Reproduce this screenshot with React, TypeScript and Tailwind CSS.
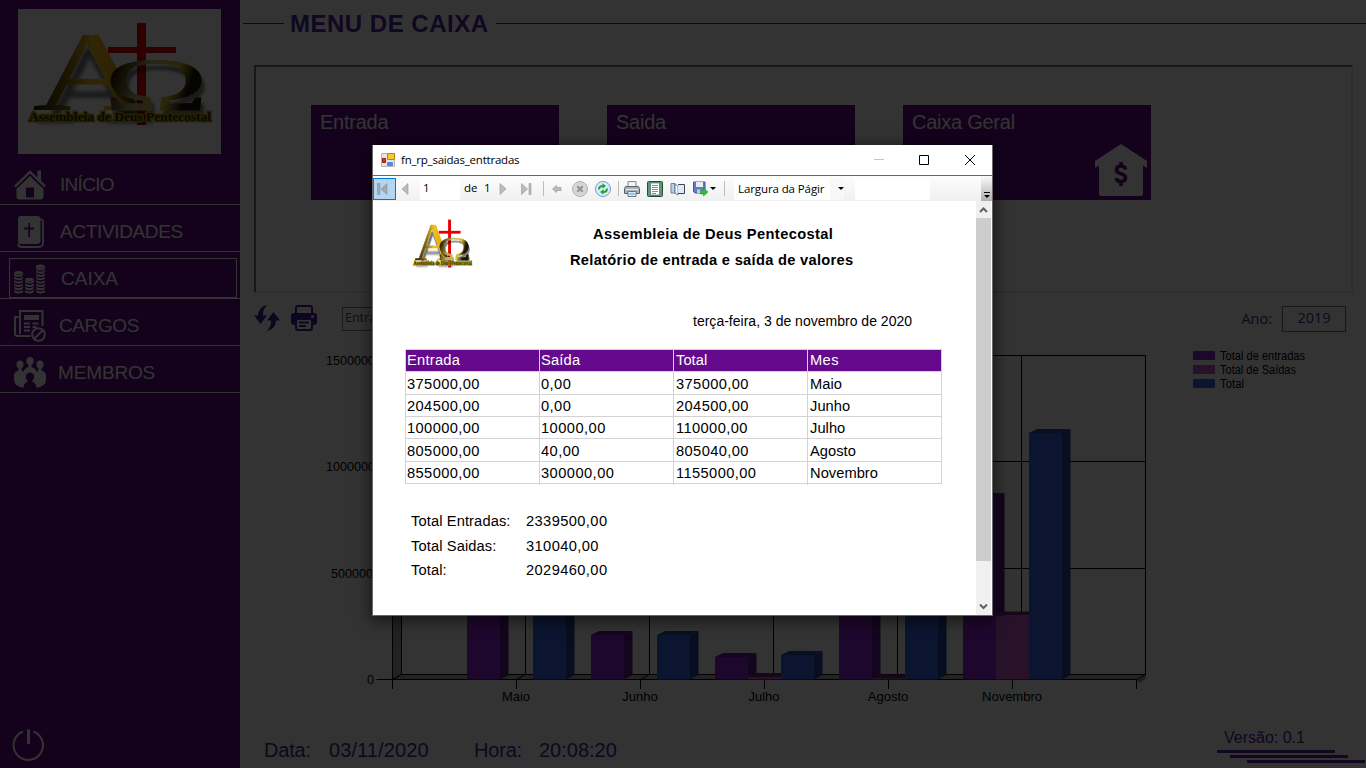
import type { ReactNode } from "react";

const arial = "font-['Liberation_Sans',Arial,sans-serif]";
const segoe = "font-['Open_Sans','Noto_Sans',sans-serif]";

function Logo({ id, className }: { id: string; className: string }) {
  return (
    <svg viewBox="0 0 203 145" preserveAspectRatio="none" className={className}>
      <defs>
        <linearGradient id={id + "a"} x1="0" y1="0" x2="1" y2="0">
          <stop offset="0" stopColor="#241b02" />
          <stop offset="0.3" stopColor="#8a6a10" />
          <stop offset="0.5" stopColor="#f2c21c" />
          <stop offset="0.72" stopColor="#e0a80c" />
          <stop offset="1" stopColor="#2a1d00" />
        </linearGradient>
        <linearGradient id={id + "o"} x1="0" y1="0" x2="1" y2="0.3">
          <stop offset="0" stopColor="#7a5a08" />
          <stop offset="0.2" stopColor="#2c2200" />
          <stop offset="0.45" stopColor="#b8b070" />
          <stop offset="0.74" stopColor="#d8c030" />
          <stop offset="0.9" stopColor="#1c1500" />
        </linearGradient>
        <filter id={id + "s"} x="-10%" y="-10%" width="125%" height="135%">
          <feDropShadow dx="3" dy="13" stdDeviation="2" floodColor="#000" floodOpacity="0.55" />
        </filter>
        <filter id={id + "t"} x="-10%" y="-10%" width="125%" height="125%">
          <feDropShadow dx="3" dy="6" stdDeviation="1.6" floodColor="#000" floodOpacity="0.5" />
        </filter>
      </defs>
      <rect x="119" y="14" width="9" height="102" fill="#e60000" />
      <rect x="90" y="38" width="68" height="6" fill="#e60000" />
      <g className="font-['Liberation_Serif',serif]">
        <text x="15" y="101" fontSize="113" textLength="118" lengthAdjust="spacingAndGlyphs" fill={`url(#${id}a)`} stroke={`url(#${id}a)`} strokeWidth="0.800" filter={`url(#${id}s)`}>A</text>
        <text x="86" y="100.500" fontSize="74" textLength="104" lengthAdjust="spacingAndGlyphs" fill={`url(#${id}o)`} stroke={`url(#${id}o)`} strokeWidth="0.800" filter={`url(#${id}t)`}>Ω</text>
        <text x="11" y="111.500" fontSize="12.500" textLength="182" lengthAdjust="spacingAndGlyphs" className="font-bold" fill="#332a20" stroke="#b5a900" strokeWidth="3" paintOrder="stroke">
          Assembleia de Deus Pentecostal
        </text>
      </g>
    </svg>
  );
}

const HomeIcon = () => (
  <svg viewBox="0 0 32 30" className="h-[30px] w-8" fill="currentColor">
    <path d="M1 16.500 16 2 31 16.500" fill="none" stroke="currentColor" strokeWidth="2.400" />
    <path d="M23.500 0.500h3.500v11l-3.500-3.500z" />
    <path fillRule="evenodd" d="M16 6 29.500 19v7.500a3 3 0 0 1-3 3h-21a3 3 0 0 1-3-3V19zM13 17.500a1 1 0 0 0-1 1v9h8V18.500a1 1 0 0 0-1-1z" />
  </svg>
);

const BibleIcon = () => (
  <svg viewBox="0 0 32 32" className="size-8" fill="currentColor">
    <path fillRule="evenodd" d="M6.500 0H23a3.500 3.500 0 0 1 3.500 3.500V25A3.500 3.500 0 0 1 23 28H6.500A2.500 2.500 0 0 1 4 25.500v-23A2.500 2.500 0 0 1 6.500 0zM14.300 7v4.500H10v2h4.300V21h1.700V13.500h4.200v-2h-4.200V7z" />
    <path d="M26.500 3q2.500 .8 2.500 3v20.500q0 4.500-4.500 4.500H8q-3.500 0-4-3" fill="none" stroke="currentColor" strokeWidth="1.800" />
  </svg>
);

function Stack({ x, n, bottom }: { x: number; n: number; bottom: number }) {
  return (
    <>
      {Array.from({ length: n }, (_, i) => (
        <path
          key={i}
          d={`M${x} ${bottom - i * 3.3 - 3.2}v1.200c0 1.700 2 2.500 4.500 2.500s4.500-.8 4.500-2.500v-1.200q-1 1.800-4.500 1.800t-4.500-1.800z`}
        />
      ))}
      <ellipse cx={x + 4.5} cy={bottom - n * 3.3 - 0.4} rx="4.300" ry="1.700" />
    </>
  );
}

const CoinsIcon = () => (
  <svg viewBox="0 0 32 31" className="h-[31px] w-8" fill="currentColor">
    <Stack x={0} n={6} bottom={30} />
    <Stack x={11} n={4} bottom={30} />
    <Stack x={22} n={8} bottom={30} />
  </svg>
);

const CargosIcon = () => (
  <svg viewBox="0 0 32 32" className="size-8" fill="none" stroke="currentColor" strokeWidth="2">
    <path d="M4.500 7H1v16.500q0 2.500 3 2.500h12.500M6 24V1h22.500v15" />
    <path d="M10 5h15v5H10z" fill="currentColor" stroke="none" />
    <path d="M10 13.500h6M10 17h6M10 20.500h6M18.500 13.500h6M18.500 17h4" />
    <circle cx="24.500" cy="24.500" r="6.300" />
    <path d="m20.500 28.500 8-8" />
  </svg>
);

const PeopleIcon = () => (
  <svg viewBox="0 0 32 31" className="h-[31px] w-8" fill="currentColor">
    <ellipse cx="16" cy="4" rx="3.700" ry="4" />
    <ellipse cx="6" cy="7.500" rx="3.500" ry="3.900" />
    <ellipse cx="26" cy="7.500" rx="3.500" ry="3.900" />
    <path d="M14.500 7h3v3q4 1 5 4.500l-2.500 3.500q-1-2.500-4-2.500t-4 2.500L9.500 14.500Q10.500 11 14.500 10z" />
    <path d="M4.500 10.500h3V13.500q3 .8 4.500 4 -.5 4.500 2 7-4.500 1.500-4.500 6.500Q2 29 .5 25.500 0 24 0 18q.5-3.500 4.500-4.500zM27.500 10.500h-3V13.500q-3 .8-4.500 4 .5 4.500-2 7 4.500 1.500 4.500 6.500Q30 29 31.500 25.500 32 24 32 18q-.5-3.500-4.500-4.500z" />
  </svg>
);

const menu: { label: string; icon: ReactNode; text: string; selected?: boolean }[] = [
  { label: "INÍCIO", icon: <HomeIcon />, text: "ml-[14px] tracking-[-0.7px]" },
  { label: "ACTIVIDADES", icon: <BibleIcon />, text: "ml-[14px] tracking-[-0.35px]" },
  { label: "CAIXA", icon: <CoinsIcon />, text: "ml-[15px]", selected: true },
  { label: "CARGOS", icon: <CargosIcon />, text: "ml-[13px] tracking-[-0.4px]" },
  { label: "MEMBROS", icon: <PeopleIcon />, text: "ml-[12px] tracking-[-0.15px]" },
];

function Sidebar() {
  return (
    <aside className="flex w-[240px] shrink-0 flex-col bg-[#650a8c] text-white">
      <div className="mt-[9px] ml-[18px] h-[145px] w-[203px] bg-white">
        <Logo id="big" className="h-[145px] w-[203px]" />
      </div>
      <nav className="mt-1">
        {menu.map((m) => (
          <div key={m.label} className="relative flex h-[47px] items-center border-b border-white pt-[7px] pl-[14px]">
            {m.selected && <div className="absolute top-[6px] left-[9px] h-10 w-[228px] border border-white" />}
            {m.icon}
            <span className={`${m.text} text-[19px] leading-6`}>{m.label}</span>
          </div>
        ))}
      </nav>
      <svg viewBox="0 0 32 32" className="mt-auto mb-[7px] ml-3 size-8" fill="none" stroke="currentColor" strokeWidth="2">
        <path d="M11 2.500A14.700 14.700 0 1 0 21.500 2.500" />
        <path d="M16.500 0.500v14.500" strokeWidth="3" />
      </svg>
    </aside>
  );
}

type Bar = { x: number; top: number; kind: "e" | "s" | "t" };
const palette = {
  e: { front: "#9626dc", side: "#601a90", top: "#701ca4" },
  s: { front: "#c05ad0", side: "#7a3080", top: "#702b78" },
  t: { front: "#3c69ec", side: "#26459a", top: "#2a4aa6" },
};
const bars: Bar[] = [
  { x: 467, top: 599, kind: "e" },
  { x: 533, top: 599, kind: "t" },
  { x: 591, top: 635, kind: "e" },
  { x: 657, top: 635, kind: "t" },
  { x: 715, top: 657, kind: "e" },
  { x: 748, top: 677, kind: "s" },
  { x: 781, top: 655, kind: "t" },
  { x: 839, top: 508, kind: "e" },
  { x: 872, top: 678.5, kind: "s" },
  { x: 905, top: 508, kind: "t" },
  { x: 963, top: 497, kind: "e" },
  { x: 996, top: 615.5, kind: "s" },
  { x: 1029, top: 433, kind: "t" },
];
const months = ["Maio", "Junho", "Julho", "Agosto", "Novembro"];
const legend = [
  { label: "Total de entradas", fill: "#9626dc" },
  { label: "Total de Saídas", fill: "#c05ad0" },
  { label: "Total", fill: "#3c69ec" },
];

function Chart() {
  return (
    <svg viewBox="240 345 1126 365" className="h-[365px] w-[1126px]">
      <path d="M392.500 359.500 401.500 355v319.500l-9 5z" fill="#a8a8a8" />
      <path d="M392.500 679.500 401.500 674.500h744l-9 5z" fill="#b0b0b0" />
      <path d="M1136.500 679.500 1146 674.500v4l-7 5z" fill="#999" />
      <g stroke="#000" fill="none">
        {[0, 1, 2, 3, 4, 5, 6].map((i) => (
          <path key={i} d={`M${401.5 + i * 124} 355V674.500L${392.5 + i * 124} 679.500V689`} />
        ))}
        {[355.5, 461.5, 568.5, 674.5].map((y) => (
          <path key={y} d={`M376.500 ${y + 5}H392.500L401.500 ${y}H1145.500`} />
        ))}
        <path d="M392.500 360V679.500H1136.500" />
      </g>
      {bars.map((b) => {
        const c = palette[b.kind];
        return (
          <g key={b.x}>
            <path d={`M${b.x} ${b.top}l8-4h33.500l-8 4z`} fill={c.top} />
            <path d={`M${b.x + 33} ${b.top}l8.500-4V675l-8.500 4.500z`} fill={c.side} />
            <path d={`M${b.x} ${b.top}h33V679.500h-33z`} fill={c.front} />
          </g>
        );
      })}
      <g className={arial} fontSize="13" textAnchor="middle">
        {months.map((m, i) => (
          <text key={m} x={516 + i * 124} y="701">{m}</text>
        ))}
      </g>
      <g className={arial} fontSize="12.600" textAnchor="end">
        <text x="375" y="364.500">1500000</text>
        <text x="375" y="470.500">1000000</text>
        <text x="373" y="577.500">500000</text>
        <text x="374" y="684">0</text>
      </g>
      <g className={arial} fontSize="12">
        {legend.map((l, i) => (
          <g key={l.label}>
            <rect x="1193" y={351 + i * 14} width="22" height="9" fill={l.fill} />
            <text x="1220" y={360 + i * 14} textLength={[85, 76, 24][i]} lengthAdjust="spacingAndGlyphs">{l.label}</text>
          </g>
        ))}
      </g>
    </svg>
  );
}

function Page() {
  return (
    <main className="flex w-[1126px] flex-col bg-white">
      <header className="flex h-[47px] items-center pl-[3px]">
        <div className="h-px w-[41px] bg-[#500a78]" />
        <h1 className="ml-[6px] w-[206px] text-[24px] leading-none font-bold tracking-[0.5px] whitespace-nowrap text-[#5026a0]">MENU DE CAIXA</h1>
        <div className="h-px flex-1 bg-[#500a78]" />
      </header>
      <section className="mt-[18px] ml-[14px] flex h-[228px] w-[1099px] gap-12 border-2 border-t-[#787878] border-r-[#e4e4e4] border-b-[#e4e4e4] border-l-[#787878] pt-[38px] pl-[55px] text-[20px] leading-6 text-white">
        {["Entrada", "Saida", "Caixa Geral"].map((c) => (
          <div key={c} className="flex h-[95px] w-[248px] flex-col bg-[#650a8c] pt-[5px] pr-1 pl-[9px] tracking-[-0.25px]">
            {c}
            {c === "Caixa Geral" && (
              <svg viewBox="0 0 52 52" className="mt-[10px] size-[52px] self-end" fill="currentColor">
                <path d="M26 0 52 17v7l-4-2.500V50a2 2 0 0 1-2 2H6a2 2 0 0 1-2-2V21.500L0 24v-7z" />
                <path d="M30.500 25.500q-.5-3.500-4.500-3.500t-4.500 3.500q0 3 4.500 4.300t4.500 4.200q0 3.500-4.500 3.500t-4.500-3.500M26 18v4M26 38v4" fill="none" stroke="#650a8c" strokeWidth="3.600" />
              </svg>
            )}
          </div>
        ))}
      </section>
      <section className="flex h-[52px] items-start pt-3">
        <svg viewBox="0 0 26 26" className="ml-[14px] size-[26px]" fill="#46209c">
          <path d="M13.500 0Q5 1 3.800 10.500H0L6.500 19 13 10.500H9Q8.500 4 13.500 0zM12.500 26q8.500-1 9.700-10.500H26L19.500 7 13 15.500h4q.5 6.500-4.500 10.500z" />
        </svg>
        <svg viewBox="0 0 26 26" className="ml-[11px] size-[26px]" fill="none" stroke="#46209c" strokeWidth="2">
          <path d="M5 9V3q0-2 2-2h12q2 0 2 2v6" />
          <path d="M3 8h20q3 0 3 3v6q0 3-3 3h-1.500v-5h-17v5H3q-3 0-3-3v-6q0-3 3-3z" fill="#46209c" stroke="none" />
          <path d="M5 15v8q0 2 2 2h12q2 0 2-2v-8M8 17.500h10M8 21h7" />
          <circle cx="21.500" cy="11.500" r="1.500" fill="#fff" stroke="none" />
        </svg>
        <div className={`${segoe} mt-[2px] ml-[25px] h-6 w-[200px] border border-[#808080] pl-[2px] text-[12.500px] leading-[20px] text-[#781ea0]`}>Entradas e Saídas</div>
        <span className={`${segoe} mt-[4px] ml-auto text-[14.500px] leading-5 text-[#5a1e8c]`}>Ano:</span>
        <div className={`${segoe} mt-px mr-5 ml-[10px] h-[26px] w-16 border border-[#787878] text-center text-[14.500px] leading-[22px] text-[#5a1e8c]`}>2019</div>
      </section>
      <Chart />
      <footer className="mt-[19px] flex h-[39px] text-[20px] leading-[42px] text-[#46289c]">
        <span className="ml-6 w-[65px] tracking-[-0.2px]">Data:</span>
        <span className="w-[145px] tracking-[0.1px]">03/11/2020</span>
        <span className="w-[65px] tracking-[-0.2px]">Hora:</span>
        <span>20:08:20</span>
        <div className="ml-auto flex w-[149px] flex-col items-start">
          <span className="ml-[7px] h-[21px] text-[16px] leading-[18px]">Versão: 0.1</span>
          <div className="h-[3px] w-[118px] bg-[#5a1ea0]" />
          <div className="mt-[2px] ml-[13px] h-[3px] w-[118px] bg-[#5a1ea0]" />
          <div className="mt-[2px] ml-[30px] h-[3px] w-[118px] bg-[#5a1ea0]" />
        </div>
      </footer>
    </main>
  );
}

const Sep = ({ className }: { className: string }) => <div className={`h-[15px] w-px shrink-0 bg-[#bdbdbd] ${className}`} />;
const Caret = ({ className }: { className: string }) => (
  <svg viewBox="0 0 6 3" className={`h-[3px] w-[6px] shrink-0 ${className}`}><path d="M0 0h6L3 3z" /></svg>
);

function Toolbar() {
  return (
    <div className={`${segoe} flex h-[25px] items-center bg-linear-to-b from-[#fdfdfd] to-[#f0f0f0] text-[11.500px] leading-none text-black`}>
      <div className="flex h-[22px] w-[23px] items-center border border-[#0078d7] bg-[#b3d7f3] pl-[3px]">
        <svg viewBox="0 0 11 12" className="h-3 w-[11px]" fill="#a3a9ae" stroke="#8b949b" strokeWidth="0.600"><path d="M.5.5H3v11H.5zM10 .5v11L4 6z" /></svg>
      </div>
      <svg viewBox="0 0 8 12" className="ml-[5px] h-3 w-2" fill="#bbb" stroke="#999" strokeWidth="0.600"><path d="M7 .5v11L1 6z" /></svg>
      <div className="ml-[11px] flex h-[23px] w-10 items-center bg-white pb-px pl-[3px]">1</div>
      <span className="mb-px ml-1 w-[20px]">de</span>
      <span className="mb-px w-[15px]">1</span>
      <svg viewBox="0 0 8 12" className="h-3 w-2" fill="#bbb" stroke="#999" strokeWidth="0.600"><path d="M1 .5v11L7 6z" /></svg>
      <svg viewBox="0 0 11 12" className="ml-[14px] h-3 w-[11px]" fill="#bbb" stroke="#999" strokeWidth="0.600"><path d="M8 .5h2v11H8zM.5.5v11L6.500 6z" /></svg>
      <Sep className="ml-[11px]" />
      <svg viewBox="0 0 10 10" className="ml-2 size-[10px]" fill="#bbb" stroke="#999" strokeWidth="0.700"><path d="M.5 5 4.500 1.500v2h4.500v3H4.500v2z" /></svg>
      <svg viewBox="0 0 16 16" className="ml-[10px] size-4">
        <circle cx="8" cy="8" r="7.500" fill="#d6d6d6" stroke="#b2b2b2" />
        <path d="m5.300 5.300 5.400 5.400m0-5.400-5.400 5.400" stroke="#939393" strokeWidth="2" />
      </svg>
      <svg viewBox="0 0 16 16" className="ml-[7px] size-4">
        <circle cx="8" cy="8" r="7.500" fill="#dcecfb" stroke="#6a9fd8" />
        <path d="M3 8.500Q3 4 7.500 4V2.200L11 5 7.500 7.800V6Q5 6 5 8.500zM13 7.500Q13 12 8.500 12v1.800L5 11l3.500-2.800V10q2.500 0 2.500-2.500z" fill="#22a536" />
      </svg>
      <Sep className="ml-[7px]" />
      <svg viewBox="0 0 16 16" className="ml-[5px] size-4">
        <path d="M4 .5h8V6H4z" fill="#eef4fa" stroke="#7c8690" />
        <path d="M1.500 5.500h13l1 2v5H.5v-5z" fill="#a9b0b6" stroke="#5c646c" />
        <path d="M2 8.500h12" stroke="#e8edf0" />
        <path d="M4 10.500h8v5H4z" fill="#d9ecfa" stroke="#6c7680" />
        <path d="M5.500 13h5" stroke="#3f9bdc" />
      </svg>
      <svg viewBox="0 0 16 16" className="ml-[7px] size-4">
        <rect x=".5" y=".5" width="15" height="15" rx="1" fill="#5a9a6c" stroke="#2a4a34" />
        <path d="M3.500 2h9v12h-9z" fill="#fff" stroke="#2f5f8a" strokeWidth="0.600" />
        <path d="M5 4.500h6M5 6.500h6M5 8.500h6M5 10.500h6M5 12.500h4" stroke="#6a86b0" strokeWidth="0.900" />
      </svg>
      <svg viewBox="0 0 16 16" className="ml-[7px] size-4">
        <path d="M1 2.500h4v9.500H1z" fill="#b8d0ee" stroke="#77828e" />
        <path d="M5 3 8 5.500V14L5 12z" fill="#fff" stroke="#55606c" strokeWidth="0.800" />
        <path d="M8 3.500h7v9H8z" fill="#dce9f8" />
        <path d="M8 3.500h6.500v9H8" fill="none" stroke="#3d4652" />
      </svg>
      <svg viewBox="0 0 16 16" className="ml-[7px] size-4">
        <path d="M.5 1h11.500v11H2L.5 10.500z" fill="#6478c8" stroke="#4655a0" />
        <path d="M3 1h7v5H3z" fill="#e3edf8" />
        <path d="M4 8.500h5V12H4z" fill="#c3cce4" />
        <path d="M7.500 9h3V7l4.500 4-4.500 4v-2h-3z" fill="#2fbe3c" stroke="#0e8a1c" strokeWidth="0.500" />
      </svg>
      <Caret className="ml-px" />
      <Sep className="ml-[8px]" />
      <div className="ml-[9px] flex h-[22px] w-[110px] items-center bg-white pl-1">
        <span className="w-[92px] leading-4 tracking-[-0.100px] whitespace-nowrap">Largura da Págir</span>
        <div className="flex h-[22px] w-[14px] items-center bg-[#f8f8f8] pl-[8px]"><Caret className="" /></div>
      </div>
      <div className="ml-[11px] h-[22px] w-[75px] bg-white" />
      <div className="ml-auto flex h-[25px] w-[11px] items-end justify-center bg-linear-to-b from-[#fafafa] to-[#b0b0b0] pb-[3px]">
        <svg viewBox="0 0 6 6" className="size-[6px]"><path d="M0 0h6v1H0zM0 3h6L3 6z" /></svg>
      </div>
    </div>
  );
}

const rows = [
  ["375000,00", "0,00", "375000,00", "Maio"],
  ["204500,00", "0,00", "204500,00", "Junho"],
  ["100000,00", "10000,00", "110000,00", "Julho"],
  ["805000,00", "40,00", "805040,00", "Agosto"],
  ["855000,00", "300000,00", "1155000,00", "Novembro"],
];
const rowStyles = ["h-[23px] leading-[24px]", "h-[22px] leading-[23px]", "h-[22px] leading-[23px]", "h-[23px] leading-[24px]", "h-[22px] leading-[23px]"];
const cellStyles = ["pl-px tracking-[0.400px]", "pl-px tracking-[0.450px]", "pl-[2px] tracking-[0.400px]", "pl-[2px] tracking-[0.050px]"];
const headStyles = ["pl-px tracking-[0.250px]", "pl-px tracking-[0.200px]", "pl-[2px] tracking-[0.050px]", "pl-[2px] tracking-[0.400px]"];
const totals = [
  ["Total Entradas:", "2339500,00", "h-[25px]"],
  ["Total Saidas:", "310040,00", "h-[24px]"],
  ["Total:", "2029460,00", "h-[24px]"],
];

function Report() {
  return (
    <div className="flex w-[603px] flex-col overflow-hidden bg-white text-[14.670px] text-black">
      <div className="flex h-[148px]">
        <Logo id="small" className="mt-[12px] ml-[37px] h-[68px] w-[65px]" />
        <div className="ml-[95px] flex flex-col pt-[20px] font-bold">
          <span className="ml-[23px] h-[26px] leading-[26px] tracking-[0.380px]">Assembleia de Deus Pentecostal</span>
          <span className="h-[26px] leading-[26px] tracking-[0.290px]">Relatório de entrada e saída de valores</span>
          <span className="mt-[40px] ml-[123px] text-[14px] leading-4 font-normal tracking-[0.010px] whitespace-nowrap">terça-feira, 3 de novembro de 2020</span>
        </div>
      </div>
      <div className="ml-8 flex w-[537px] flex-col border border-[#d3d3d3]">
        <div className="grid h-[21px] grid-cols-[134px_134px_134px_133px] divide-x divide-[#d3d3d3] bg-[#650a8c] leading-[20px] text-white">
          {["Entrada", "Saída", "Total", "Mes"].map((h, j) => (
            <div key={h} className={headStyles[j]}>{h}</div>
          ))}
        </div>
        {rows.map((r, i) => (
          <div key={i} className={`${rowStyles[i]} grid grid-cols-[134px_134px_134px_133px] divide-x divide-[#d3d3d3] border-t border-[#d3d3d3]`}>
            {r.map((v, j) => (
              <div key={j} className={cellStyles[j]}>{v}</div>
            ))}
          </div>
        ))}
      </div>
      <div className="mt-[25px] ml-[38px] flex flex-col leading-6 tracking-[0.400px]">
        {totals.map(([l, v, h]) => (
          <div key={l} className={`${h} flex`}>
            <span className="w-[115px] tracking-[0.120px]">{l}</span>
            <span>{v}</span>
          </div>
        ))}
      </div>
    </div>
  );
}

function ReportWindow() {
  return (
    <div className="absolute top-[145px] left-[372px] flex h-[471px] w-[621px] flex-col border-r border-b border-l border-[#696969] bg-white shadow-[0_3px_14px_2px_rgba(0,0,0,0.55)]">
      <div className={`${segoe} flex h-[31px] items-center border-b border-[#696969] text-[11.500px] text-black`}>
        <svg viewBox="0 0 14 14" className="ml-2 size-[14px]">
          <path d="M.5.5h13v13H.5z" fill="#e4e4e4" stroke="#b5b5b5" />
          <path d="M6.500.5h7v6h-7z" fill="#f8c632" stroke="#b8860b" />
          <path d="M1.500 5.500h3v4h-3z" fill="#d23a2a" stroke="#942015" />
          <path d="M6.500 9.500h5v3h-5z" fill="#4d84e8" stroke="#5c8ade" />
        </svg>
        <span className="ml-[6px] tracking-[-0.220px]">fn_rp_saidas_enttradas</span>
        <svg viewBox="0 0 10 10" className="ml-auto size-[10px]" stroke="#c4c4c4"><path d="M0 4.500h10" /></svg>
        <svg viewBox="0 0 10 10" className="ml-[35px] size-[10px]" fill="none" stroke="#000"><path d="M.5.5h9v9h-9z" /></svg>
        <svg viewBox="0 0 10 10" className="mr-[17px] ml-9 size-[10px]" stroke="#000"><path d="m0 0 10 10M10 0 0 10" /></svg>
      </div>
      <Toolbar />
      <div className="flex min-h-0 flex-1">
        <Report />
        <div className="flex w-[15px] flex-col items-center bg-[#f0f0f0]">
          <svg viewBox="0 0 15 17" className="h-[17px] w-[15px]" fill="none" stroke="#606060" strokeWidth="2"><path d="m4 11 3.500-3.500L11 11" /></svg>
          <div className="h-[343px] w-[15px] bg-[#cdcdcd]" />
          <svg viewBox="0 0 15 17" className="mt-auto h-[17px] w-[15px]" fill="none" stroke="#606060" strokeWidth="2"><path d="m4 6.500 3.500 3.500L11 6.500" /></svg>
        </div>
      </div>
    </div>
  );
}

export default function App() {
  return (
    <div className={`${arial} relative flex h-[768px] w-[1366px] overflow-hidden`}>
      <Sidebar />
      <Page />
      <div className="absolute inset-0 bg-black/80" />
      <ReportWindow />
    </div>
  );
}
